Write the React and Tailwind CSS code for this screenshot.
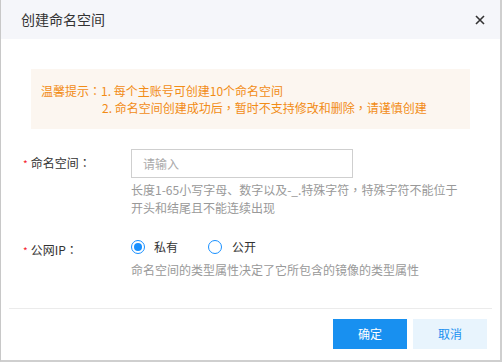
const TC = ({ children }) => (
  <span style={{ fontFamily: '"Noto Sans CJK TC", sans-serif' }}>{children}</span>
);

export default function App() {
  const font = { fontFamily: '"Noto Sans CJK SC", "Noto Sans", sans-serif' };
  return (
    <div className="w-[503px] h-[363px] bg-white" style={font}>
      <div className="w-[502px] h-[362px] border-l border-l-[#c8c8c8] border-r-2 border-r-[#cfcfcf] border-b-2 border-b-[#cfcfcf] flex flex-col">
        <div className="h-[39px] bg-[#f5f6fa] flex items-center justify-between pl-[20px] pr-[15px]">
          <span className="text-[14px] text-[#333]">创建命名空间</span>
          <svg width="10" height="10" viewBox="0 0 10 10">
            <path d="M1 1 L9 9 M9 1 L1 9" stroke="#333" strokeWidth="1.6" />
          </svg>
        </div>
        <div className="px-[30px] pt-[30px]">
          <div className="h-[60px] bg-[#fcf6f0] pl-[10px] flex flex-col justify-center text-[12px] leading-[17px] text-[#f28c16]">
            <div>温馨提示<TC>：</TC>1. 每个主账号可创建10个命名空间</div>
            <div className="pl-[61px]">2. 命名空间创建成功后<TC>，</TC>暂时不支持修改和删除<TC>，</TC>请谨慎创建</div>
          </div>
        </div>
        <div className="flex pl-[22px] pt-[20px]">
          <div className="w-[108px] h-[28px] flex items-center text-[12px] text-[#333]">
            <span className="text-[#f5222d] text-[10px] mr-[3px]">*</span>命名空间<TC>：</TC>
          </div>
          <div className="flex flex-col">
            <div className="w-[222px] h-[29px] border border-[#cfcfcf] flex items-center pl-[11px] text-[12px] text-[#aaa]">请输入</div>
            <div className="text-[12px] leading-[18px] text-[#999] mt-[3px]">
              长度1-65小写字母、数字以及-_.特殊字符<TC>，</TC>特殊字符不能位于<br />开头和结尾且不能连续出现
            </div>
          </div>
        </div>
        <div className="flex pl-[22px] pt-[18px]">
          <div className="w-[108px] h-[20px] flex items-center text-[12px] text-[#333] mt-[5px]">
            <span className="text-[#f5222d] text-[10px] mr-[3px]">*</span>公网IP<TC>：</TC>
          </div>
          <div className="flex flex-col">
            <div className="flex items-center h-[24px] text-[12px] text-[#333]">
              <span className="w-[14px] h-[14px] rounded-full border border-[#1890ff] flex items-center justify-center">
                <span className="w-[8px] h-[8px] rounded-full bg-[#1890ff]"></span>
              </span>
              <span className="ml-[9px]">私有</span>
              <span className="ml-[30px] w-[14px] h-[14px] rounded-full border border-[#1890ff]"></span>
              <span className="ml-[10px]">公开</span>
            </div>
            <div className="text-[12px] leading-[18px] text-[#999] mt-[2px]">命名空间的类型属性决定了它所包含的镜像的类型属性</div>
          </div>
        </div>
        <div className="flex-1"></div>
        <div className="mx-[8px] border-t border-[#ebebeb]"></div>
        <div className="flex justify-end gap-[6px] pr-[13px] pt-[10px] pb-[11px]">
          <button className="w-[74px] h-[30px] bg-[#1890f0] text-white text-[12px]">确定</button>
          <button className="w-[74px] h-[30px] bg-[#e8f4fd] text-[#1890f0] text-[12px]">取消</button>
        </div>
      </div>
    </div>
  );
}
